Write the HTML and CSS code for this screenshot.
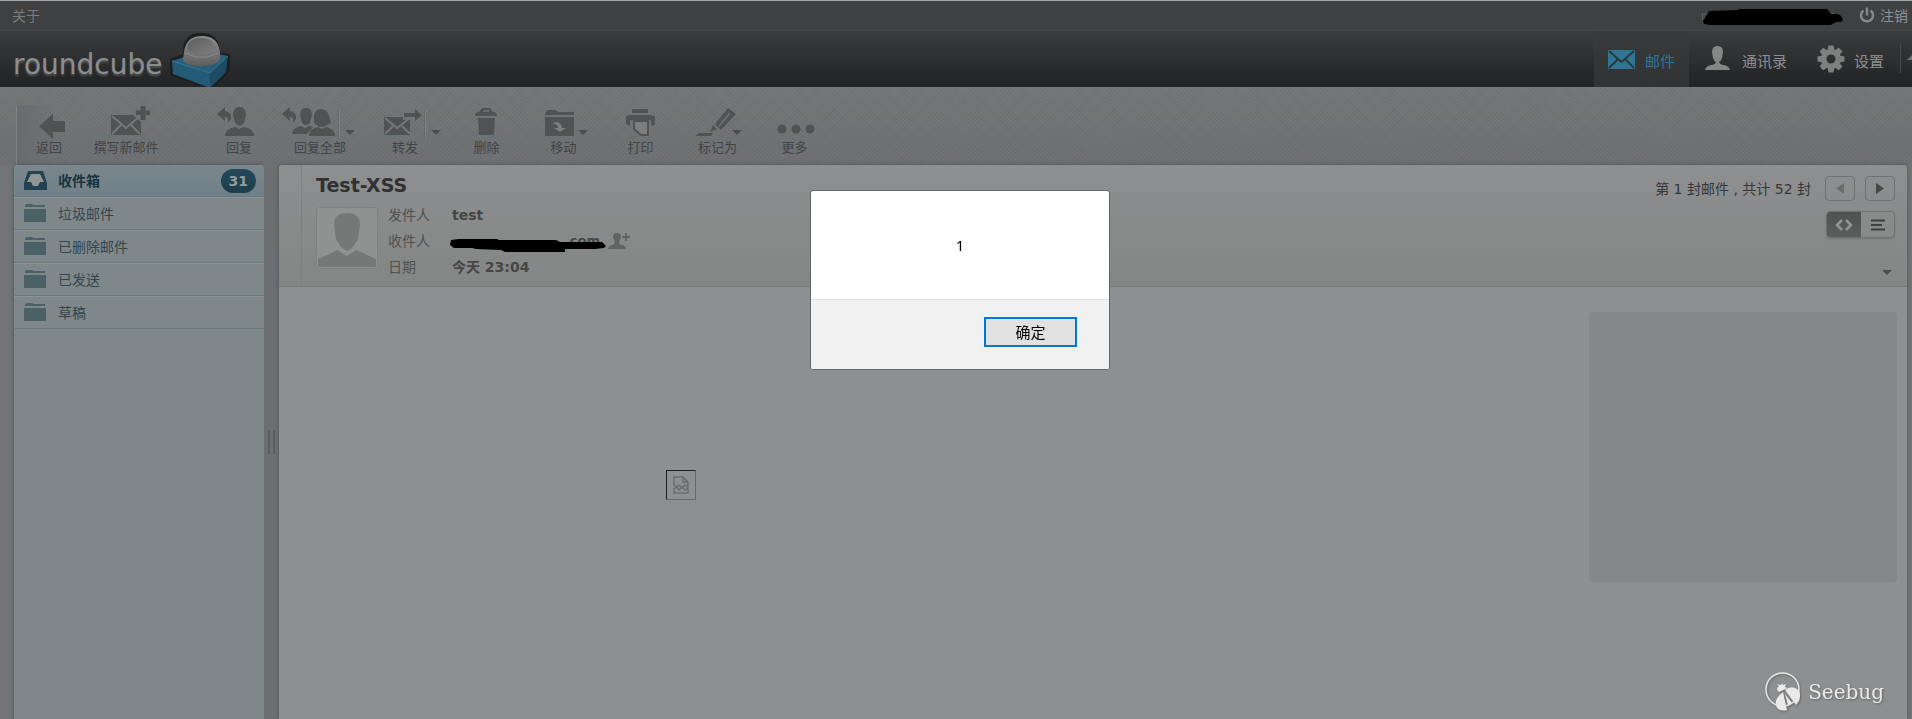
FILE: index.html
```html
<!DOCTYPE html>
<html lang="zh-CN">
<head>
  <meta charset="UTF-8">
  <title>Roundcube Webmail</title>
  <link rel="stylesheet" href="styles.css">
</head>
<body>
  <header>
    <div class="topline">
      <a class="about-link" href="#">关于</a>
      <div class="topright">
        <svg class="username-mask" width="144" height="18" viewBox="1702 7 144 18"><path d="M1702.500 20v-6h5M1831 14q3-2 4 2" fill="none" stroke="#656667"/><path d="M1709 11l28-1 3-1h87l4 5 7 0 3 2 2 4-2 2h-5l-5 3h-121l-6-1-1-3 2-3z" fill="#000"/></svg>
        <a class="logout" href="#">
          <svg width="16" height="17" viewBox="0 0 16 17"><path d="M4.500 3.500a6 6 0 1 0 7 0M8 0.500v8" fill="none" stroke="#858686" stroke-width="2.500"/></svg>
          注销
        </a>
      </div>
    </div>
    <div class="topnav">
      <div class="logo">
        <span class="logo-text">roundcube</span>
        <svg class="logo-cube" width="62" height="60" viewBox="170 32 62 60">
          <defs>
            <linearGradient id="ball" x1="0" y1="0" x2="0" y2="1"><stop offset="0" stop-color="#8c8c8c"/><stop offset=".55" stop-color="#777"/><stop offset="1" stop-color="#5d5d5d"/></linearGradient>
            <linearGradient id="dome" x1="0" y1="0" x2="1" y2="1"><stop offset="0" stop-color="#5e5e5e"/><stop offset="1" stop-color="#808080"/></linearGradient>
          </defs>
          <path d="M171 59l13-5q-1-21 18-21t19 20l10 1v17l-19 20-41-16z" fill="#1d1f20"/>
          <path d="M173 61l30-10 26 5-18 17z" fill="#296078"/>
          <path d="M173 61l38 12v15l-37-14z" fill="#235a75"/>
          <path d="M211 73l18-17-2 16-16 16z" fill="#1c4b63"/>
          <path d="M173 61l38 12 18-17" fill="none" stroke="#347894"/>
          <path d="M184 59q1 7 18 7 18-1 19-7l0-7q-2-16-18-16t-18 16z" fill="url(#ball)"/>
          <path d="M188 49q1-11 14-11 13 0 15 11-5 5-15 6-9-1-14-6z" fill="url(#dome)"/>
          <path d="M186 53l11 4h11l11-4" fill="none" stroke="#8a8a8a"/>
        </svg>
      </div>
      <nav class="taskbar">
        <a class="task selected" href="#">
          <svg width="28" height="28" viewBox="0 0 28 28"><path d="M0 5h27v19H0z" fill="#2f7492"/><path d="M1 6l12.500 11L26 6M1 23l9-9M26 23l-9-9" fill="none" stroke="#29373d" stroke-width="1.800"/></svg>
          <span>邮件</span>
        </a>
        <a class="task" href="#">
          <svg width="28" height="28" viewBox="0 0 28 28"><path d="M7 7q0-6 5.500-6T18 7l-1 6q-1 3-3 4 1 3 5 3 5 1 6 5H0q1-4 6-5 4 0 5-3-2-1-3-4z" fill="#858686"/></svg>
          <span>通讯录</span>
        </a>
        <a class="task" href="#">
          <svg width="28" height="28" viewBox="0 0 28 28"><g fill="#7e7f7f"><circle cx="14" cy="14" r="10"/><g id="teeth"><path d="M11.500 0.500h5l1 5h-7zM11.500 27.500h5l1-5h-7zM.5 11.500v5l5 1v-7zM27.500 11.500v5l-5 1v-7z"/></g><use href="#teeth" transform="rotate(45 14 14)"/></g><circle cx="14" cy="14" r="4.500" fill="#2f3031"/></svg>
          <span>设置</span>
        </a>
        <button class="nav-toggle" type="button" aria-label="折叠"><svg width="12" height="6" viewBox="0 0 12 6"><path d="M0 5l5-5 5 5z" fill="#707172"/></svg></button>
      </nav>
    </div>
  </header>

  <div class="toolbar">
    <button class="tool back" type="button">
      <svg width="65" height="34" viewBox="16 105 65 34"><path d="M38 126l14-12v7h12v11H52v7z"/></svg>
      返回
    </button>
    <button class="tool compose" type="button">
      <svg width="90" height="34" viewBox="81 105 90 34"><path d="M111 115h22l8 7v13h-30z"/><path d="M140.500 106h5v4.500h4.500v4.500h-4.500v5h-5v-5H136v-4.500h4.500z"/><path class="cut" d="M112 116l14 12 14-12M112 134l9-9M140 134l-9-9"/></svg>
      撰写新邮件
    </button>
    <button class="tool" type="button">
      <svg width="78" height="34" viewBox="200 105 78 34"><path d="M217 114l8-7v4q7 1 6 8l-3 4q1-7-3-6v4z"/><path d="M233 115q0-8 6.500-8t6.500 8l-2 8q-4 5-9 0z"/><path d="M225 136q0-7 10-9l4 2 5-2q10 2 10 9z"/></svg>
      回复
    </button>
    <div class="tool-group wide">
      <button class="tool" type="button">
        <svg width="84" height="34" viewBox="278 105 84 34"><path d="M282 114l8-7v4q7 1 6 8l-3 4q1-7-3-6v4z"/><path d="M300 115q0-7 6-7t6 7l-2 8q-4 4-8 0z"/><path d="M292 134q0-6 9-8l4 2 5-2 3 1-6 7z"/><path d="M314 123v-7q1-7 7-7t8 7l2 7-4 2-4 2h-4z"/><path d="M309 136q0-7 9-9l4 2 4-2q9 2 9 9z"/></svg>
        回复全部
      </button>
      <button class="caret" type="button" aria-label="回复全部选项"></button>
    </div>
    <div class="tool-group forward">
      <button class="tool" type="button">
        <svg width="86" height="34" viewBox="362 105 86 34"><path d="M384 117h19v3h7v15h-26z"/><path d="M404 113h11v-4l7 6-7 6v-4h-11z"/><path class="cut" d="M385 118l12 10 13-10M385 134l8-8M410 134l-8-8"/></svg>
        转发
      </button>
      <button class="caret" type="button" aria-label="转发选项"></button>
    </div>
    <button class="tool narrow" type="button">
      <svg width="77" height="34" viewBox="448 105 77 34"><path d="M475 116q0-4 4-4l3-4h8l3 4q4 0 4 4zM478 118h17l-1 17h-15z"/><path d="M483 111h6" stroke="#727477" stroke-width="1.500"/></svg>
      删除
    </button>
    <div class="tool-group narrow">
      <button class="tool" type="button">
        <svg width="77" height="34" viewBox="525 105 77 34"><path d="M545 115v-2l3-3h7l3 2h16v3zM545 117h29v19h-29z"/><path d="M553 123q8-3 9 5h4l-6 4-6-4h4q0-4-5-4z" fill="#7c7d7e"/></svg>
        移动
      </button>
      <button class="caret" type="button" aria-label="移动选项"></button>
    </div>
    <button class="tool narrow" type="button">
      <svg width="77" height="34" viewBox="602 105 77 34"><path d="M632 109h16v4h-16zM626 116l4-1h20l5 1v9l-4 1v-6h-21v6l-4-2z"/><path d="M634 121h14v14h-7l-7-6z" fill="#7c7d7e" stroke="#505254" stroke-width="2"/></svg>
      打印
    </button>
    <div class="tool-group narrow">
      <button class="tool" type="button">
        <svg width="77" height="34" viewBox="679 105 77 34"><path d="M695 136l4-3h14l-2 3zM710 132l3-7 4 4zM715 124l13-16 8 6-15 16z"/><path d="M719 126l11-13" stroke="#727477" stroke-width="1.500"/></svg>
        标记为
      </button>
      <button class="caret" type="button" aria-label="标记选项"></button>
    </div>
    <button class="tool narrow" type="button">
      <svg width="77" height="34" viewBox="756 105 77 34"><circle cx="782" cy="129" r="4.500"/><circle cx="796" cy="129" r="4.500"/><circle cx="810" cy="129" r="4.500"/></svg>
      更多
    </button>
  </div>

  <div class="mainscreen">
    <aside class="folders">
      <ul>
        <li class="inbox">
          <a href="#">
            <svg width="23" height="22" viewBox="0 0 23 22"><path d="M0 13L4 1h15l4 12v7H0z" fill="#22434f"/><path d="M7 4h9l4 8h-4l-2 4H9l-2-4H3z" fill="#909595"/></svg>
            收件箱
          </a>
          <span class="unread">31</span>
        </li>
        <li><a href="#"><svg width="23" height="22" viewBox="0 0 23 22"><path d="M1 4V2l2-1h5l2 1h11v2zM0 6h22v13H0z" fill="#4c6067"/></svg>垃圾邮件</a></li>
        <li><a href="#"><svg width="23" height="22" viewBox="0 0 23 22"><path d="M1 4V2l2-1h5l2 1h11v2zM0 6h22v13H0z" fill="#4c6067"/></svg>已删除邮件</a></li>
        <li><a href="#"><svg width="23" height="22" viewBox="0 0 23 22"><path d="M1 4V2l2-1h5l2 1h11v2zM0 6h22v13H0z" fill="#4c6067"/></svg>已发送</a></li>
        <li><a href="#"><svg width="23" height="22" viewBox="0 0 23 22"><path d="M1 4V2l2-1h5l2 1h11v2zM0 6h22v13H0z" fill="#4c6067"/></svg>草稿</a></li>
      </ul>
    </aside>
    <div class="splitter"><span></span></div>
    <main class="message">
      <section class="message-header">
        <div class="gutter"></div>
        <div class="message-info">
          <h1>Test-XSS</h1>
          <div class="sender">
            <svg class="photo" width="62" height="62" viewBox="0 0 62 62"><rect x=".5" y=".5" width="61" height="61" rx="3" fill="#909191" stroke="#808181"/><path d="M18 18Q18 6 31 6t13 12l-2 14q-5 10-11 12-7-3-11-12z" fill="#767777"/><path d="M2 60V52l16-7 3-2 10 6 9-6 5 2 15 7v8z" fill="#767777"/></svg>
            <table>
              <tr><th>发件人</th><td>test</td></tr>
              <tr>
                <th>收件人</th>
                <td>
                  <div class="recipient">
                    <span class="address">.com</span>
                    <svg class="address-mask" width="158" height="16" viewBox="449 238 158 16"><path d="M451 240l8-1h38l2 1h57l4 2h42l4 4-2 2-9 1h-30v3h-60l-4-2-25-1-4-1h-18l-4-3z" fill="#000"/></svg>
                    <button class="add-contact" type="button" aria-label="添加到通讯录"><svg width="24" height="18" viewBox="0 0 24 18"><path d="M5 5q0-4 4-4t4 4l-2 6q0 1 3 2 3 0 4 4H0q1-4 4-4 3-1 3-2z"/><path d="M17 1h2v3h3v2h-3v3h-2V6h-3V4h3z"/></svg></button>
                  </div>
                </td>
              </tr>
              <tr><th>日期</th><td>今天 23:04</td></tr>
            </table>
          </div>
        </div>
        <div class="message-tools">
          <div class="pager">
            <span>第 1 封邮件 , 共计 52 封</span>
            <button type="button" aria-label="上一封" disabled><svg width="10" height="12" viewBox="0 0 10 12"><path d="M9 0v11L1 5.500z" fill="#6c6d6d"/></svg></button>
            <button type="button" aria-label="下一封"><svg width="10" height="12" viewBox="0 0 10 12"><path d="M1 0v11l8-5.500z" fill="#454646"/></svg></button>
          </div>
          <div class="format-switch">
            <button class="active" type="button" aria-label="HTML"><svg width="18" height="12" viewBox="0 0 18 12"><path d="M7 1L2 6l5 5M11 1l5 5-5 5" fill="none" stroke="#929393" stroke-width="2.500"/></svg></button>
            <button type="button" aria-label="纯文本"><svg width="16" height="12" viewBox="0 0 16 12"><path d="M1 1.500h14M1 6h11M1 10.500h14" stroke="#3f4040" stroke-width="2"/></svg></button>
          </div>
          <button class="caret header-toggle" type="button" aria-label="显示更多信息"></button>
        </div>
      </section>
      <section class="message-body">
        <div class="broken-image">
          <svg width="16" height="18" viewBox="0 0 16 18"><path d="M1 9V1h9l5 5v5l-3-2-3 3-3-3-3 2zM10 1v5h5M1 13l3-2 2 3 3-3 3 3 3-2v5H1z" fill="none" stroke="#6c6d6e" stroke-width="1.500"/></svg>
        </div>
        <div class="attachments"></div>
      </section>
    </main>
  </div>

  <div class="alert-layer">
    <div class="alert" role="alertdialog" aria-label="1">
      <p>1</p>
      <div class="alert-buttons"><button type="button">确定</button></div>
    </div>
  </div>

  <div class="watermark">
    <svg width="38" height="42" viewBox="1764 671 38 42"><circle cx="1782.500" cy="689.500" r="16.500" fill="none" stroke="#e9e9e9" stroke-width="1.500"/><path d="M1777 690q0-3 2-4l-2-2 4 1 1-2 1 2 3-1-1 3 3 1-9 4z" fill="#e9e9e9"/><path d="M1783 692l4 18q-8 2-11-4-2-7 7-14zM1785 690q6-5 12-1 5 4 2 12l-3 4zM1785 694l7 9-4 2z" fill="#e9e9e9"/></svg>
    <span>Seebug</span>
  </div>
</body>
</html>
```
FILE: styles.css
```css
* { box-sizing: border-box; }
body {
  margin: 0;
  min-height: 100vh;
  display: flex;
  flex-direction: column;
  font-family: "DejaVu Sans", "Noto Sans CJK SC", sans-serif;
  font-size: 14px;
  line-height: 20px;
  color: #38393a;
  background-color: #727477;
  overflow-x: hidden;
}
a { color: inherit; text-decoration: none; }
button {
  padding: 0;
  border: none;
  background: none;
  font: inherit;
  color: inherit;
  cursor: pointer;
}
svg { display: block; flex: none; }

/* header */
.topline {
  display: flex;
  justify-content: space-between;
  align-items: center;
  height: 30px;
  padding: 0 4px 0 12px;
  background-color: #3e4041;
  border-top: 1px solid #a4a9a8;
  color: #7b7c7d;
}
.topright { display: flex; align-items: center; gap: 13px; }
.logout { display: flex; align-items: center; gap: 5px; color: #919293; }
.topnav {
  display: flex;
  justify-content: space-between;
  height: 57px;
  background: linear-gradient(#3b3c3d, #212223);
  border-top: 1px solid #444546;
}
.logo { display: flex; align-items: flex-start; padding-left: 13px; }
.logo-text {
  font-size: 28px;
  line-height: 32px;
  margin-top: 18px;
  color: #8c8d8d;
  text-shadow: 0 2px 2px #555;
}
.logo-cube { margin: 1px 0 0 7px; }
.taskbar { display: flex; gap: 2px; font-size: 15px; color: #8e8f90; }
.task {
  display: flex;
  align-items: center;
  gap: 9px;
  padding: 0 14px;
}
.task span { padding-top: 6px; }
.task.selected { background: linear-gradient(#393a3b, #313233); color: #2f7696; }
.nav-toggle {
  width: 12px;
  height: 30px;
  margin-top: 12px;
  padding-left: 6px;
  border-left: 1px solid #484949;
  overflow: hidden;
}

/* toolbar */
.toolbar {
  display: flex;
  height: 78px;
  padding: 18px 16px 0;
  background:
    repeating-linear-gradient(45deg, rgba(0,0,0,0.03) 0 1px, transparent 1px 3px),
    repeating-linear-gradient(-45deg, rgba(0,0,0,0.03) 0 1px, transparent 1px 3px),
    linear-gradient(#76787a, #6f7275);
  font-size: 13px;
  color: #424446;
}
.tool {
  display: flex;
  flex-direction: column;
  align-items: center;
  width: 78px;
  line-height: 18px;
  white-space: nowrap;
}
.tool svg { fill: #505254; }
.tool .cut { fill: none; stroke: #747678; stroke-width: 2; }
.tool.back {
  width: 65px;
  background: linear-gradient(90deg, #696b6e, transparent 60%);
  border-left: 1px solid #808284;
}
.tool.compose { width: 90px; margin-right: 29px; }
.tool-group { position: relative; }
.tool-group .tool { width: 100%; }
.tool-group.wide { width: 84px; }
.tool-group.forward { width: 86px; }
.narrow { width: 77px; }
.caret {
  width: 10px;
  height: 5px;
  background-color: #4b4d4f;
  clip-path: polygon(0 0, 100% 0, 50% 100%);
}
.tool-group .caret { position: absolute; right: 14px; top: 25px; }
.tool-group.wide .caret, .tool-group.forward .caret { right: 7px; }
.tool-group.wide::after, .tool-group.forward::after {
  content: "";
  position: absolute;
  right: 22px;
  top: 5px;
  height: 28px;
  border-left: 1px solid #65676a;
  border-right: 1px solid #808284;
}

/* folder list */
.mainscreen { flex: 1; display: flex; padding: 0 5px 0 14px; }
.folders {
  width: 250px;
  background-color: #7e888b;
  border-radius: 4px 4px 0 0;
  box-shadow: 0 0 4px #505254;
  overflow: hidden;
}
.folders ul { list-style: none; margin: -1px 0 0; padding: 0; }
.folders li {
  display: flex;
  align-items: center;
  justify-content: space-between;
  height: 33px;
  padding: 0 8px 0 10px;
  border-top: 1px solid #8b9497;
  border-bottom: 1px solid #68777c;
  color: #34464d;
}
.folders li a { display: flex; align-items: center; gap: 11px; }
.folders .inbox {
  background: linear-gradient(#7a878d, #718088);
  border-top-color: #7a878d;
  font-weight: bold;
  color: #183540;
}
.unread {
  padding: 2px 8px;
  border-radius: 12px;
  background: linear-gradient(#23495a, #1d3f4b);
  color: #939b9e;
}
.splitter {
  width: 15px;
  display: flex;
  align-items: center;
  justify-content: center;
  background-color: #6d6e71;
}
.splitter span {
  width: 7px;
  height: 24px;
  border: solid #5a5c60;
  border-width: 0 2px;
}

/* message */
.message {
  flex: 1;
  display: flex;
  flex-direction: column;
  border-radius: 4px 4px 0 0;
  background-color: #8e8f90;
  box-shadow: 0 0 4px #505254;
  overflow: hidden;
}
.message-header {
  display: flex;
  height: 122px;
  background: linear-gradient(#8e8f90, #848585);
  border-bottom: 1px solid #757676;
}
.gutter { width: 23px; border-right: 1px solid #7f8080; }
.message-info { flex: 1; padding: 9px 0 0 14px; }
h1 { margin: 0; font-size: 19px; line-height: 22px; color: #303131; }
.sender { display: flex; gap: 10px; }
.photo { margin-top: 11px; }
.sender table { border-collapse: collapse; margin-top: 6px; }
.sender th {
  width: 64px;
  padding: 3px 0;
  font-weight: normal;
  text-align: left;
  color: #505151;
}
.sender td { padding: 3px 0; font-weight: bold; color: #454646; }
.recipient { position: relative; display: flex; align-items: center; height: 20px; }
.address { width: 148px; text-align: right; font-size: 13px; }
.address-mask { position: absolute; left: -3px; top: 7px; }
.add-contact { margin-left: 8px; }
.add-contact svg { fill: #626363; }
.message-tools {
  display: flex;
  flex-direction: column;
  align-items: flex-end;
  padding: 11px 12px 0 0;
}
.pager { display: flex; align-items: center; gap: 10px; color: #363737; }
.pager span { margin-right: 4px; }
.pager button {
  display: flex;
  align-items: center;
  justify-content: center;
  width: 30px;
  height: 25px;
  border: 1px solid #707171;
  border-radius: 4px;
}
.format-switch {
  display: flex;
  margin-top: 10px;
  border: 1px solid #707171;
  border-radius: 4px;
  box-shadow: 0 1px 2px #747575;
  overflow: hidden;
}
.format-switch button {
  display: flex;
  align-items: center;
  justify-content: center;
  width: 33px;
  height: 25px;
}
.format-switch .active { width: 34px; background: linear-gradient(#505151, #5b5c5c); }
.header-toggle { margin: 32px 3px 0 0; }
.message-body {
  flex: 1;
  display: flex;
  justify-content: space-between;
  align-items: flex-start;
  padding: 25px 10px 0 387px;
}
.broken-image {
  display: flex;
  align-items: center;
  justify-content: center;
  width: 30px;
  height: 30px;
  margin-top: 158px;
  border: 1px solid #68696a;
  border-top-color: #1d1e1e;
  border-left-color: #1d1e1e;
}
.attachments {
  width: 308px;
  height: 270px;
  border-radius: 4px;
  background-color: #868788;
}

/* javascript alert */
.alert-layer {
  position: fixed;
  inset: 0;
  display: flex;
  justify-content: center;
  align-items: flex-start;
  padding: 190px 0 0 8px;
}
.alert {
  width: 300px;
  border: 1px solid #666767;
  border-radius: 3px;
  background-color: #fff;
  overflow: hidden;
  font-family: "Noto Sans", "Noto Sans CJK SC", sans-serif;
  font-size: 15px;
  color: #000;
}
.alert p { margin: 0; padding: 44px 0; text-align: center; }
.alert-buttons {
  display: flex;
  justify-content: flex-end;
  padding: 17px 32px 22px;
  background-color: #f1f1f1;
  border-top: 1px solid #dfdfdf;
}
.alert-buttons button {
  width: 93px;
  height: 30px;
  border: 2px solid #0078d7;
  background-color: #e1e1e1;
  line-height: 24px;
}

.watermark {
  position: fixed;
  right: 28px;
  bottom: 6px;
  display: flex;
  align-items: center;
  gap: 6px;
  font-family: "DejaVu Serif", serif;
  font-size: 20px;
  color: #e9e9e9;
  filter: drop-shadow(1px 1px 1px #666);
}
```
